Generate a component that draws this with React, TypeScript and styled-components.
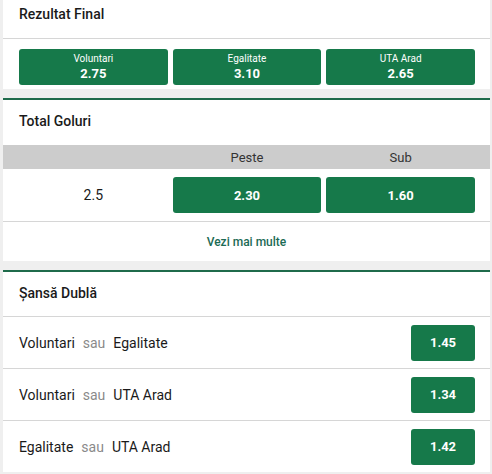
import { FC } from 'react';
import styled, { createGlobalStyle } from 'styled-components';

const GlobalStyle = createGlobalStyle`
    html, body {
        margin: 0;
        padding: 0;
        background: #efefef;
        font-family: Roboto, "Liberation Sans", Arial, sans-serif;
        color: #1a1a1a;
    }
`;

// page is scrolled a little: first card's top border and part of its header are off screen
const Page = styled.div`
    display: flex;
    flex-direction: column;
    gap: 9px;
    padding: 0 2px 0 3px;
    margin-top: -9px;
`;

const Card = styled.section`
    background: #fff;
    border-top: 2px solid #1f6b4b;
    display: flex;
    flex-direction: column;
`;

const Header = styled.div<{ $h?: number }>`
    height: ${p => p.$h ?? 45}px;
    box-sizing: border-box;
    display: flex;
    align-items: center;
    padding: 0 16px 3px;
    font-size: 14px;
    font-weight: 500;
    color: #1a1a1a;
`;

const ButtonRow = styled.div`
    display: grid;
    grid-template-columns: repeat(3, 1fr);
    gap: 5px;
    padding: 10px 15px 4px 16px;
    border-top: 1px solid #d6d6d6;
`;

const OddButton = styled.button<{ $w?: number }>`
    height: 36px;
    width: ${p => (p.$w ? `${p.$w}px` : 'auto')};
    border: none;
    border-radius: 3px;
    background: #16794a;
    color: #fff;
    font-family: inherit;
    display: flex;
    flex-direction: column;
    align-items: center;
    justify-content: center;
    gap: 1px;
    padding: 0;
    cursor: pointer;
`;

const OddLabel = styled.span`
    font-size: 10px;
    font-weight: 400;
    line-height: 12px;
`;

const OddValue = styled.span`
    font-size: 13px;
    font-weight: 700;
    line-height: 15px;
`;

const ColHead = styled.div`
    display: grid;
    grid-template-columns: repeat(3, 1fr);
    gap: 5px;
    height: 24px;
    padding: 0 15px 0 16px;
    background: #cccccc;
    align-items: center;
    font-size: 13px;
    color: #333;
    text-align: center;
`;

const LineRow = styled.div`
    display: grid;
    grid-template-columns: repeat(3, 1fr);
    gap: 5px;
    padding: 8px 15px 8px 16px;
    align-items: center;
`;

const LineValue = styled.div`
    text-align: center;
    font-size: 14px;
    color: #1a1a1a;
`;

const MoreLink = styled.a`
    height: 39px;
    border-top: 1px solid #d6d6d6;
    display: flex;
    align-items: center;
    justify-content: center;
    font-size: 12px;
    font-weight: 500;
    color: #1c6b55;
    text-decoration: none;
`;

const DoubleRow = styled.div`
    height: 51px;
    border-top: 1px solid #d6d6d6;
    display: flex;
    align-items: center;
    justify-content: space-between;
    padding: 0 15px 0 16px;
`;

const Pair = styled.div`
    font-size: 14px;
    color: #1a1a1a;
`;

const Or = styled.span`
    color: #8a8a8a;
    margin: 0 8px;
`;

const results = [
    { label: 'Voluntari', odd: '2.75' },
    { label: 'Egalitate', odd: '3.10' },
    { label: 'UTA Arad', odd: '2.65' },
];

const doubles = [
    { a: 'Voluntari', b: 'Egalitate', odd: '1.45' },
    { a: 'Voluntari', b: 'UTA Arad', odd: '1.34' },
    { a: 'Egalitate', b: 'UTA Arad', odd: '1.42' },
];

const App: FC = () => (
    <>
        <GlobalStyle />
        <Page>
            <Card>
                <Header>Rezultat Final</Header>
                <ButtonRow>
                    {results.map(r => (
                        <OddButton key={r.label}>
                            <OddLabel>{r.label}</OddLabel>
                            <OddValue>{r.odd}</OddValue>
                        </OddButton>
                    ))}
                </ButtonRow>
            </Card>

            <Card>
                <Header>Total Goluri</Header>
                <ColHead>
                    <span />
                    <span>Peste</span>
                    <span>Sub</span>
                </ColHead>
                <LineRow>
                    <LineValue>2.5</LineValue>
                    <OddButton>
                        <OddValue>2.30</OddValue>
                    </OddButton>
                    <OddButton>
                        <OddValue>1.60</OddValue>
                    </OddButton>
                </LineRow>
                <MoreLink href="#">Vezi mai multe</MoreLink>
            </Card>

            <Card>
                <Header $h={44}>Șansă Dublă</Header>
                {doubles.map(d => (
                    <DoubleRow key={d.a + d.b}>
                        <Pair>
                            {d.a}
                            <Or>sau</Or>
                            {d.b}
                        </Pair>
                        <OddButton $w={64}>
                            <OddValue>{d.odd}</OddValue>
                        </OddButton>
                    </DoubleRow>
                ))}
            </Card>
        </Page>
    </>
);

export default App;
